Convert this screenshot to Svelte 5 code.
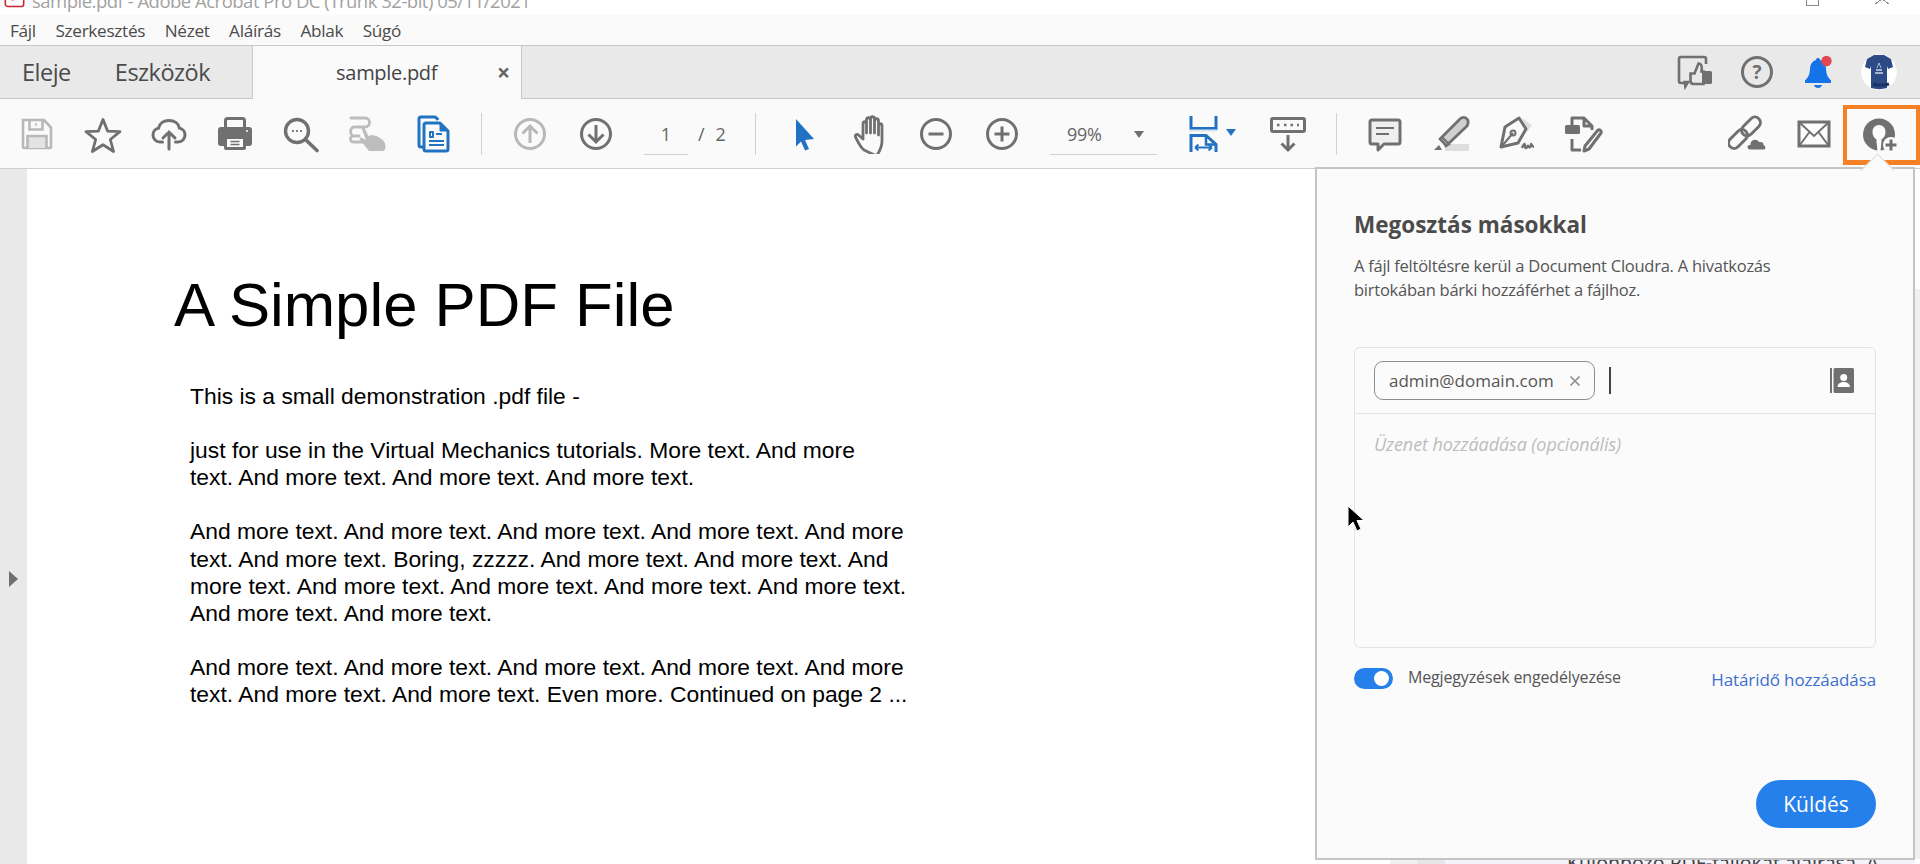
<script>
  const menus = ['Fájl', 'Szerkesztés', 'Nézet', 'Aláírás', 'Ablak', 'Súgó'];
  const paragraphs = [
    ['This is a small demonstration .pdf file -'],
    ['just for use in the Virtual Mechanics tutorials. More text. And more', 'text. And more text. And more text. And more text.'],
    ['And more text. And more text. And more text. And more text. And more', 'text. And more text. Boring, zzzzz. And more text. And more text. And', 'more text. And more text. And more text. And more text. And more text.', 'And more text. And more text.'],
    ['And more text. And more text. And more text. And more text. And more', 'text. And more text. And more text. Even more. Continued on page 2 ...']
  ];
</script>

<div class="app">
  <div class="titlebar">
    <svg class="appicon" viewBox="0 0 16 16"><rect x="1" y="-6" width="14" height="14" rx="2" fill="#fff" stroke="#c8242b" stroke-width="1.2"/><path d="M5 2.5c1 .5 2 .5 3 0" stroke="#c8242b" fill="none"/></svg>
    <span class="title">sample.pdf - Adobe Acrobat Pro DC (Trunk 32-bit) 05/11/2021</span>
    <span class="winctl restore"></span>
    <span class="winctl close"></span>
  </div>

  <nav class="menubar">
    {#each menus as m}<span>{m}</span>{/each}
  </nav>

  <div class="tabbar">
    <span class="tab eleje">Eleje</span>
    <span class="tab eszk">Eszközök</span>
    <div class="doctab"><span class="docname">sample.pdf</span><span class="docx">×</span></div>
    <div class="tabicons">
      <svg width="40" height="40" viewBox="0 0 40 40" fill="none" stroke="#707070" stroke-width="2.600"><path d="M31 12V7a2 2 0 0 0-2-2H6a2 2 0 0 0-2 2v22a2 2 0 0 0 2 2h3"/><path d="M9 29.500h5l-4 6.500z" fill="#707070" stroke-width="1.500"/><path d="M15.500 21.500h4l4-10c2.800 0 4 3 3 8h2V32H18.500c-2 0-3-1-3-3z" fill="#e9e9e9"/><rect x="27" y="19" width="10" height="13" rx="1.500" fill="#707070" stroke="none"/></svg>
      <div class="help"><span>?</span></div>
      <div class="bell">
        <svg width="40" height="40" viewBox="0 0 40 40"><path d="M20 6c1.400 0 2 .9 2 2 4 1 6 5 6 9 0 5 2 9 5 11.500V31H7v-2.500c3-2.500 5-6.500 5-11.500 0-4 2-8 6-9 0-1.100.6-2 2-2z" fill="#1473e6"/><path d="M16 33h8c-.5 2-2 3-4 3s-3.500-1-4-3z" fill="#1473e6"/><circle cx="28.500" cy="9" r="5.200" fill="#e34850"/></svg>
      </div>
      <div class="avatar">
        <svg width="36" height="36" viewBox="0 0 36 36"><circle cx="18" cy="18" r="18" fill="#fff"/><path d="M13 1h10l7 4 2 8-5 2-1-3v22c-5 1.500-11 1.500-16 0V12l-1 3-5-2 2-8z" fill="#2b4a86"/><path d="M12 30c5 1.500 11 1.500 16 0" stroke="#1d3366" stroke-width="3" fill="none"/><path d="M15 16h6M14 19h8" stroke="#cdd6ea" stroke-width="1.300"/><path d="M18 9l-2 5M18 9l2 5" stroke="#cdd6ea" stroke-width=".8"/></svg>
      </div>
    </div>
  </div>

  <div class="toolbar">
    <div class="group first">
      <button><svg width="40" height="40" viewBox="0 0 40 40" fill="none" stroke="#b8b8b8" stroke-width="2.600"><path d="M6 6h21l7 7.500V33a1 1 0 0 1-1 1H7a1 1 0 0 1-1-1z"/><path d="M12.500 6.500v9h13v-9"/><path d="M19 9v3" stroke-width="1.500"/><path d="M10.500 34V22h19v12" fill="#e3e3e3"/></svg></button>
      <button><svg width="40" height="40" viewBox="0 0 40 40" fill="none" stroke="#707070" stroke-width="2.800" stroke-linejoin="round"><path d="M20 5.500l4.600 11.600 12.400.6-9.700 7.800 3.300 12-10.600-6.800-10.600 6.800 3.300-12-9.700-7.800 12.400-.6z"/></svg></button>
      <button><svg width="40" height="40" viewBox="0 0 40 40" fill="none" stroke="#707070" stroke-width="3" stroke-linecap="round"><path d="M13.500 28H11c-4 0-7-3-7-7 0-3.500 2.400-6.300 5.600-6.900C10.500 9.500 14.800 6.500 20 6.500s9.500 3 10.400 7.600c3.200.6 5.600 3.400 5.600 6.900 0 4-3 7-7 7h-2.500"/><path d="M20 35V18M14 24l6-6 6 6"/></svg></button>
      <button><svg width="40" height="40" viewBox="0 0 40 40"><path d="M10.500 15V6.500a2 2 0 0 1 2-2h15a2 2 0 0 1 2 2V15" fill="#fafafa" stroke="#707070" stroke-width="3"/><path d="M6 13h28a3 3 0 0 1 3 3v13a3 3 0 0 1-3 3h-3v-7H9v7H6a3 3 0 0 1-3-3V16a3 3 0 0 1 3-3z" fill="#707070"/><path d="M9 22h22v12a2 2 0 0 1-2 2H11a2 2 0 0 1-2-2z" fill="#707070"/><rect x="12" y="25" width="16" height="8" fill="#fafafa"/><path d="M15.500 27.500h9M15.500 30.500h9" stroke="#707070" stroke-width="1.300"/><circle cx="32" cy="17" r="1" fill="#fff"/></svg></button>
      <button><svg width="40" height="40" viewBox="0 0 40 40" fill="none" stroke="#707070"><circle cx="16" cy="17" r="11.500" stroke-width="3.400"/><path d="M25 26l11 10.500" stroke-width="3.600" stroke-linecap="round"/><path d="M11 17h1.800M15.100 17h1.800M19.200 17h1.800" stroke-width="2"/></svg></button>
      <button><svg width="40" height="40" viewBox="0 0 40 40" fill="none" stroke="#bdbdbd" stroke-width="2.800" stroke-linecap="round"><path d="M4 4h14c6 0 6 9 0 9H7c-4.500 0-4.500 9 0 9h5M6 22c-3.500 1-3.500 6 1 6h8"/><path d="M14 13c1.500-1 3 0 4 2l3.500 7 3-1 5 1 5 3c3 2 4 5 4 8 0 2-1 4-3 4H22l-9-11c-1-2 0-3 2-2l4 2z" fill="#bdbdbd" stroke="none"/></svg></button>
      <button><svg width="40" height="40" viewBox="0 0 40 40" fill="none" stroke="#2272c3" stroke-width="3" stroke-linejoin="round"><path d="M11 33H8a2 2 0 0 1-2-2V5a2 2 0 0 1 2-2h13c2 0 3 1 4 3"/><path d="M13 9h14l8 8v18a2 2 0 0 1-2 2H13a2 2 0 0 1-2-2V11a2 2 0 0 1 2-2z" fill="#fafafa"/><path d="M27 9l8 8h-8z" fill="#2272c3" stroke-width="1"/><path d="M17 23h3v-5h-3zM23 20h6M16 27h15M16 31h15" stroke-width="2"/></svg></button>
    </div>
    <i class="sep"></i>
    <div class="group pad">
      <button><svg width="40" height="40" viewBox="0 0 40 40" fill="none" stroke="#b8b8b8" stroke-width="3"><circle cx="20" cy="20" r="14.500"/><path d="M20 29V12M12.500 19.500 20 12l7.500 7.500"/></svg></button>
      <button><svg width="40" height="40" viewBox="0 0 40 40" fill="none" stroke="#707070" stroke-width="3"><circle cx="20" cy="20" r="14.500"/><path d="M20 11v17M12.500 20.500 20 28l7.500-7.500"/></svg></button>
    </div>
    <div class="pager"><span class="pageinput">1</span><span class="slash">/</span><span class="total">2</span></div>
    <i class="sep sep2"></i>
    <div class="group nav">
      <button><svg width="40" height="40" viewBox="0 0 40 40"><path d="M12 5l18 20-9 1 4 9-4 1.500-4-9-5 5z" fill="#2272c3"/></svg></button>
      <button><svg width="40" height="40" viewBox="-2 1 40 40" fill="none" stroke="#707070" stroke-width="2.800" stroke-linecap="round" stroke-linejoin="round"><path d="M12 37c-4-3-6-8-8.500-13-.8-2 1.500-3.500 3-2l4.500 4V11c0-3 3.500-3 3.500 0v9-13c0-3 4-3 4 0v13-14c0-3 4-3 4 0v14-12c0-3 4-3 4 0v14-9c0-3 3.500-3 3.500 0v15c0 7-3.500 12-5.500 15z"/></svg></button>
      <button><svg width="40" height="40" viewBox="0 0 40 40" fill="none" stroke="#707070" stroke-width="3"><circle cx="20" cy="20" r="14.500"/><path d="M12.500 20h15"/></svg></button>
      <button><svg width="40" height="40" viewBox="0 0 40 40" fill="none" stroke="#707070" stroke-width="3"><circle cx="20" cy="20" r="14.500"/><path d="M12.500 20h15M20 12.500v15"/></svg></button>
    </div>
    <div class="zoombox"><span>99%</span><b class="caret"></b></div>
    <div class="fit">
      <svg width="40" height="40" viewBox="0 0 40 40" fill="none" stroke="#2272c3" stroke-width="3"><path d="M8 2v12.500h25V2"/><path d="M6 16.500h28" stroke="#dbe6f2" stroke-width="2"/><path d="M8 38V21.500h15l10 9V38"/><path d="M23 21.500v9h10" stroke-width="2.500"/><path d="M12 33.500h17M12 33.500l3.500-3M12 33.500l3.500 3M29 33.500l-3.500-3M29 33.500l-3.500 3" stroke-width="1.800"/></svg>
      <b class="caret blue"></b>
    </div>
    <div class="group kb">
      <button><svg width="40" height="40" viewBox="0 0 40 40" fill="none" stroke="#707070" stroke-width="3"><rect x="3.500" y="4.500" width="33" height="13" rx="1.500" fill="#fafafa"/><path d="M9 11h2.500M16 11h2.500M22.500 11h2.500M29 11h2" stroke-width="2.400"/><path d="M20 21v15M13.500 29.500 20 36l6.500-6.500"/></svg></button>
    </div>
    <i class="sep sep3"></i>
    <div class="group edit">
      <button><svg width="40" height="40" viewBox="0 0 40 40" fill="none" stroke="#707070" stroke-width="3" stroke-linejoin="round"><path d="M7 6h26a2 2 0 0 1 2 2v20a2 2 0 0 1-2 2H19l-6 6v-6H7a2 2 0 0 1-2-2V8a2 2 0 0 1 2-2z" fill="#efefef"/><path d="M11 14h18M11 20h13" stroke-width="1.800"/></svg></button>
      <button><svg width="40" height="40" viewBox="0 0 40 40"><rect x="14" y="30" width="24" height="7" fill="#dedede"/><path d="M13 29 9 25 29 5c2-2 5-2 7 0s1 5 0 7L15 32z" fill="#d0d0d0" stroke="#707070" stroke-width="2.800" stroke-linejoin="round"/><path d="M8 31l-5 5h8z" fill="#707070"/><path d="M11 23l8 8" stroke="#707070" stroke-width="2"/></svg></button>
      <button><svg width="40" height="40" viewBox="0 0 40 40"><path d="M25 4l10 7-5 7" fill="#dedede"/><path d="M22 4l-14 9-4 20 17-4 8-14z" fill="none" stroke="#707070" stroke-width="3" stroke-linejoin="round"/><path d="M5 32l11-13" stroke="#707070" stroke-width="2"/><circle cx="16" cy="19" r="2.500" fill="none" stroke="#707070" stroke-width="2"/><path d="M25 34c2-5 3-5 3-2s2 3 3-1c.5 3 3 3 3 0s1 2 3 2" fill="none" stroke="#707070" stroke-width="2.400"/></svg></button>
      <button><svg width="40" height="40" viewBox="0 0 40 40" fill="none" stroke="#707070" stroke-width="3" stroke-linejoin="round"><path d="M9 11V4h12l8 8v4M21 4v8h8"/><rect x="2" y="11" width="15" height="9" rx="1.500" fill="#707070" stroke="none"/><path d="M9 25v11h9"/><path d="M35 16c1.500-1 4 1 3 3L26 35l-5 2 1-5z"/></svg></button>
    </div>
    <div class="group share">
      <button><svg width="40" height="40" viewBox="0 0 40 40" fill="none" stroke="#707070" stroke-width="3"><rect x="12" y="7" width="22" height="11" rx="5.500" transform="rotate(-45 23 12.500)"/><rect x="-1" y="19.500" width="22" height="11" rx="5.500" transform="rotate(-45 10 25)"/><path d="M22 36.500c-4 0-5-6-.5-6.500 .5-5 7-7 10-3 3-.5 5 1.500 5 3.500 2.500 .5 2.500 6-.5 6z" fill="#707070" stroke="#fafafa" stroke-width="2"/></svg></button>
      <button><svg width="40" height="40" viewBox="0 0 40 40" fill="none" stroke="#707070" stroke-width="3"><rect x="5" y="8" width="30" height="24" fill="#fdfdfd"/><path d="M5.500 8.500 20 22 34.500 8.500M5.500 31.500 15.500 18M34.500 31.500 24.500 18" stroke-width="2"/></svg></button>
      <button class="active"><svg width="40" height="40" viewBox="2 0 40 40"><circle cx="19" cy="20.500" r="16" fill="#707070"/><path d="M19 11c4 0 6.500 3 6.500 7 0 3.500-1.700 6-4 7.500v2l-1 9.500h-3l-1-9.500v-2c-2.300-1.500-4-4-4-7.500 0-4 2.500-7 6.500-7z" fill="#fbfbfb"/><circle cx="31" cy="31" r="8" fill="#fbfbfb"/><path d="M31 25.500v11M25.500 31h11" stroke="#707070" stroke-width="3"/></svg></button>
    </div>
  </div>

  <main class="main">
    <aside class="gutter"><b class="expand"></b></aside>
    <article class="page">
      <h1>A Simple PDF File</h1>
      {#each paragraphs as p}
        <p>{#each p as line}<span>{line}</span>{/each}</p>
      {/each}
      <div class="strip"><i class="s1"></i><i class="s2"></i><div class="s3"><span>Különböző PDF-fájlokat aláírása. A</span></div></div>
      <i class="rightedge"></i>
    </article>

    <section class="panel">
      <i class="tip"></i>
      <h2>Megosztás másokkal</h2>
      <div class="desc">A fájl feltöltésre kerül a Document Cloudra. A hivatkozás<br>birtokában bárki hozzáférhet a fájlhoz.</div>
      <div class="field">
        <div class="to">
          <span class="chip"><span>admin@domain.com</span><svg width="14" height="14" viewBox="0 0 14 14"><path d="M2.500 2.500l9 9M11.500 2.500l-9 9" stroke="#8e8e8e" stroke-width="1.700"/></svg></span>
          <i class="textcaret"></i>
          <svg class="book" width="24" height="25" viewBox="0 0 24 25"><rect x="0" y="0" width="2" height="25" fill="#707070"/><rect x="3.500" y="0" width="20.500" height="25" rx="1.500" fill="#707070"/><circle cx="13.700" cy="9.500" r="3.500" fill="#fff"/><path d="M7.500 19c0-3.500 3-5 6.200-5s6.200 1.500 6.200 5z" fill="#fff"/></svg>
        </div>
        <div class="msg">Üzenet hozzáadása (opcionális)</div>
      </div>
      <div class="opts">
        <span class="toggle"><i></i></span>
        <span class="optlabel">Megjegyzések engedélyezése</span>
        <a class="deadline" href="#top">Határidő hozzáadása</a>
      </div>
      <div class="foot"><button class="send">Küldés</button></div>
    </section>

    <svg class="mouse" width="20" height="28" viewBox="0 0 20 28"><path d="M2 1v21l5-5 4 9 4-2-4-8.500h7z" fill="#000" stroke="#fff" stroke-width="1"/></svg>
  </main>
</div>

<style>
  :global(body) { margin: 0; background: #fff; }
  .app { width: 1920px; height: 864px; overflow: hidden; position: relative; display: flex; flex-direction: column; font-family: "Open Sans", "Noto Sans", sans-serif; color: #4b4b4b; }
  button { border: 0; background: none; padding: 0; margin: 0; font: inherit; display: flex; align-items: center; justify-content: center; }

  .titlebar { height: 15px; flex: none; position: relative; overflow: hidden; background: #fff; display: flex; align-items: flex-end; }
  .appicon { width: 21px; height: 21px; margin-left: 4px; flex: none; align-self: flex-start; margin-top: -4px; }
  .title { margin-left: 7px; font-size: 18.500px; line-height: 20px; color: #a2a2a2; letter-spacing: -.5px; white-space: nowrap; margin-bottom: 4px; }
  .winctl { position: absolute; }
  .restore { left: 1806px; top: -8px; width: 11px; height: 12px; border: 1px solid #8a8a8a; }
  .close { left: 1875px; top: -6px; width: 14px; height: 10px; background: linear-gradient(to top right, transparent 47%, #8a8a8a 47%, #8a8a8a 53%, transparent 53%), linear-gradient(to top left, transparent 47%, #8a8a8a 47%, #8a8a8a 53%, transparent 53%); }

  .menubar { height: 30px; flex: none; background: #fafafa; border-bottom: 1px solid #c8c8c8; display: flex; align-items: center; padding-left: 10px; gap: 19.500px; font-size: 17.200px; color: #4b4b4b; letter-spacing: -.3px; }

  .tabbar { height: 52px; flex: none; background: #e9e9e9; border-bottom: 1px solid #c8c8c8; display: flex; align-items: center; position: relative; font-size: 23.500px; color: #4b4b4b; }
  .tab { letter-spacing: -.5px; }
  .eleje { margin-left: 22px; }
  .eszk { margin-left: 44px; }
  .doctab { margin-left: 42px; width: 270px; height: 53px; align-self: flex-start; background: #fafafa; border-right: 1px solid #c8c8c8; border-left: 1px solid #c8c8c8; display: flex; align-items: center; box-sizing: border-box; position: relative; font-size: 20px; }
  .docname { margin-left: 83px; letter-spacing: -.3px; color: #444; }
  .docx { position: absolute; left: 244px; font-size: 23px; font-weight: 700; color: #666; line-height: 1; }
  .tabicons { margin-left: auto; display: flex; align-items: center; }
  .tabicons > svg { margin-right: 26px; }
  .help { width: 32px; height: 32px; box-sizing: border-box; border: 3px solid #707070; border-radius: 50%; display: flex; align-items: center; justify-content: center; font-size: 19px; font-weight: 700; color: #707070; margin-right: 25px; }
  .bell { width: 40px; height: 40px; margin-right: 23px; }
  .avatar { width: 36px; height: 36px; margin-right: 23px; border-radius: 50%; overflow: hidden; }

  .toolbar { height: 69px; flex: none; background: #fafafa; border-bottom: 1px solid #cfcfcf; display: flex; align-items: center; position: relative; }
  .group { display: flex; align-items: center; }
  .group button { width: 66px; height: 40px; }
  .first { margin-left: 4px; }
  .sep { width: 1px; height: 42px; background: #d2d2d2; flex: none; }
  .first + .sep { margin-left: 15px; }
  .pad { margin-left: 15px; }
  .pager { margin-left: 15px; width: 111px; height: 40px; display: flex; align-items: center; font-size: 18px; color: #666; position: relative; }
  .pageinput { width: 44px; height: 40px; line-height: 38px; text-align: center; border-bottom: 1px solid #d0d0d0; box-sizing: border-box; margin-top: 3px; }
  .slash { margin-left: 10px; }
  .total { margin-left: 11px; }
  .nav { margin-left: 15px; }
  .zoombox { margin-left: 15px; width: 107px; height: 40px; margin-top: 3px; border-bottom: 1px solid #d0d0d0; box-sizing: border-box; display: flex; align-items: center; font-size: 18px; color: #666; position: relative; padding-bottom: 2px; }
  .zoombox span { margin-left: 17px; letter-spacing: -.3px; }
  .caret { width: 0; height: 0; border-left: 5px solid transparent; border-right: 5px solid transparent; border-top: 7px solid #707070; position: absolute; right: 13px; top: 16px; }
  .caret.blue { border-top-color: #2272c3; right: 0; top: 15px; }
  .fit { margin-left: 26px; width: 53px; height: 40px; position: relative; }
  .kb { margin-left: 19px; }
  .sep3 { margin-left: 15px; }
  .edit { margin-left: 15px; }
  .share { margin-left: auto; margin-right: 0; }
  .share button { width: 66px; }
  .share button.active { width: 77px; height: 60px; box-sizing: border-box; border: 4px solid #f58025; border-bottom-width: 5px; margin-left: -4px; margin-top: 2px; }

  .main { flex: 1; display: flex; position: relative; min-height: 0; }
  .gutter { width: 27px; flex: none; background: #e9e9e9; position: relative; }
  .expand { position: absolute; left: 9px; top: 402px; width: 0; height: 0; border-top: 8px solid transparent; border-bottom: 8px solid transparent; border-left: 9px solid #707070; }
  .page { flex: 1; background: #fff; font-family: "Liberation Sans", Arial, sans-serif; color: #000; position: relative; overflow: hidden; padding-left: 147px; }
  h1 { margin: 0; padding-top: 101px; font-weight: 400; font-size: 61.700px; line-height: 70px; margin-bottom: 43px; }
  .page p { margin: 0 0 27.100px 16px; font-size: 22.850px; line-height: 27.100px; }
  .page p span { display: block; white-space: nowrap; }
  .strip { position: absolute; left: 1363px; right: 5px; bottom: 0; height: 5px; display: flex; }
  .s1 { width: 27px; background: #f1f1f1; }
  .s2 { width: 28px; background: #e6e6e6; }
  .s3 { flex: 1; background: #f4f3fb; overflow: hidden; font-family: "Noto Sans", sans-serif; font-size: 19.500px; color: #444; position: relative; }
  .s3 span { position: absolute; left: 122px; top: -10px; white-space: nowrap; }
  .rightedge { position: absolute; right: 0; top: 120px; bottom: 5px; width: 5px; background: #f0f0f0; }

  .panel { position: absolute; left: 1315px; top: -2px; width: 600px; height: 693px; box-sizing: border-box; background: #fbfbfb; border: 2px solid #c4c4c4; padding: 41px 37px 0 37px; display: flex; flex-direction: column; }
  .tip { position: absolute; left: 549px; top: -10px; width: 22px; height: 22px; background: #fbfbfb; border-top: 1px solid #dcdcdc; border-left: 1px solid #dcdcdc; transform: rotate(45deg) scale(1.05, 1.05); }
  h2 { margin: 0; font-size: 22.500px; font-weight: 700; color: #4b4b4b; line-height: 30px; }
  .desc { margin-top: 14px; font-size: 16.500px; line-height: 24px; color: #555; letter-spacing: -.25px; }
  .field { margin-top: 45px; height: 301px; box-sizing: border-box; border: 1px solid #e4e4e4; border-radius: 6px; display: flex; flex-direction: column; }
  .to { height: 66px; flex: none; box-sizing: border-box; border-bottom: 1px solid #e4e4e4; display: flex; align-items: center; padding: 0 21px 0 19px; }
  .chip { width: 221px; height: 39px; box-sizing: border-box; border: 1px solid #8e8e8e; border-radius: 9px; display: flex; align-items: center; justify-content: space-between; padding: 0 12px 0 14px; font-size: 17px; color: #555; }
  .textcaret { width: 2px; height: 27px; background: #444; margin-left: 14px; }
  .book { margin-left: auto; }
  .msg { padding: 18px 0 0 19px; font-size: 18px; font-style: italic; color: #bdbdbd; line-height: 24px; letter-spacing: -.1px; }
  .opts { margin-top: 20px; display: flex; align-items: flex-start; height: 30px; }
  .toggle { width: 39px; height: 21px; border-radius: 11px; background: #2680eb; position: relative; flex: none; }
  .toggle i { position: absolute; right: 4px; top: 3px; width: 15px; height: 15px; background: #fff; border-radius: 50%; }
  .optlabel { margin-left: 15px; font-size: 16px; line-height: 18px; color: #555; letter-spacing: -.15px; }
  .deadline { margin-left: auto; font-size: 17px; line-height: 23px; color: #3c6fd0; text-decoration: none; letter-spacing: -.1px; }
  .foot { margin-top: 82px; display: flex; justify-content: flex-end; }
  .send { width: 120px; height: 48px; border-radius: 24px; background: #2680eb; color: #fff; font-size: 21px; }

  .mouse { position: absolute; left: 1346px; top: 336px; }
</style>
